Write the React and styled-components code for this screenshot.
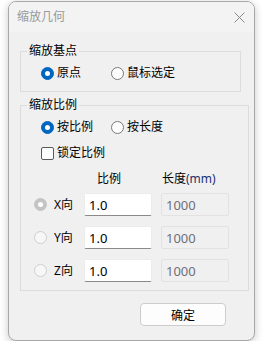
import styled, { createGlobalStyle } from 'styled-components'

const GlobalStyle = createGlobalStyle`
  html, body {
    margin: 0;
    padding: 0;
    background: #ffffff;
  }
  body {
    font-family: "Noto Sans", "Noto Sans CJK SC", sans-serif;
    font-size: 12px;
    color: #000;
  }
`

const Page = styled.div`
  padding: 1px 0 0 8px;
`

const Janela = styled.div`
  width: 247px;
  height: 340px;
  box-sizing: border-box;
  border: 1px solid #a8a8a8;
  border-radius: 8px;
  background: #f0f0f0;
  box-shadow: 0 2px 8px rgba(0, 0, 0, 0.22);
  overflow: hidden;
  display: flex;
  flex-direction: column;
`

const BarraTitulo = styled.div`
  height: 30px;
  flex: none;
  background: #f3f3f3;
  display: flex;
  align-items: center;
  justify-content: space-between;
  padding: 0 9px 0 8px;
`

const Titulo = styled.span`
  color: #999;
  font-size: 12px;
  line-height: 16px;
`

const Fechar = styled.svg`
  width: 11px;
  height: 11px;
`

const Corpo = styled.div`
  display: flex;
  flex-direction: column;
  gap: 5px;
  padding: 11px 13px 0 11px;
`

const Grupo = styled.fieldset`
  margin: 0;
  border: 1px solid #dcdcdc;
  padding: ${p => p.$pad};
  display: flex;
  flex-direction: column;
  gap: 10px;
`

const Legenda = styled.legend`
  padding: 0 2px;
  margin: 0;
  line-height: 16px;
  font-size: 12px;
`

const Linha = styled.div`
  display: flex;
  align-items: center;
  height: 16px;
  padding-left: ${p => p.$indent || 0}px;
`

const Opcao = styled.label`
  display: flex;
  align-items: center;
  gap: 3px;
  width: ${p => p.$w || 'auto'};
  line-height: 16px;
`

const Radio = styled.span`
  width: 13px;
  height: 13px;
  box-sizing: border-box;
  border-radius: 50%;
  flex: none;
  display: flex;
  align-items: center;
  justify-content: center;
  background: ${p => (p.$on ? (p.$off ? '#c4c4c4' : '#0067c0') : p.$off ? '#f7f7f7' : '#fdfdfd')};
  border: 1px solid ${p => (p.$on ? (p.$off ? '#c4c4c4' : '#0067c0') : p.$off ? '#cfcfcf' : '#7a7a7a')};
  &::after {
    content: '';
    display: ${p => (p.$on ? 'block' : 'none')};
    width: 5px;
    height: 5px;
    border-radius: 50%;
    background: #fff;
  }
`

const Caixa = styled.span`
  width: 13px;
  height: 13px;
  box-sizing: border-box;
  border: 1px solid #5a5a5a;
  border-radius: 2px;
  background: #fdfdfd;
  flex: none;
`

const Cabecalho = styled.div`
  display: flex;
  height: 16px;
  line-height: 16px;
  margin-bottom: -4px;
  padding-left: 7px;
`

const Cab = styled.span`
  margin-left: ${p => p.$ml}px;
  width: ${p => p.$w}px;
`

const Mm = styled.span`
  color: #1c2f6e;
`

const LinhaEixo = styled.div`
  display: flex;
  align-items: center;
  height: 23px;
  padding-left: 7px;
`

const RadioCelula = styled.div`
  width: 20px;
  display: flex;
`

const Eixo = styled.span`
  width: 30px;
  line-height: 16px;
`

const Campo = styled.div`
  width: 68px;
  height: 23px;
  box-sizing: border-box;
  padding: 0 4px;
  display: flex;
  align-items: center;
  font-size: 13px;
  margin-left: ${p => (p.$dis ? 9 : 0)}px;
  background: ${p => (p.$dis ? '#f0f0f0' : '#ffffff')};
  color: ${p => (p.$dis ? '#6f6f7a' : '#000')};
  border: 1px solid ${p => (p.$dis ? '#e2e2e2' : '#ececec')};
  border-bottom-color: ${p => (p.$dis ? '#e2e2e2' : '#8a8a8a')};
  border-radius: 2px;
`

const Rodape = styled.div`
  display: flex;
  justify-content: flex-end;
  padding: 12px 28px 0 0;
`

const Botao = styled.button`
  width: 86px;
  height: 23px;
  border: 1px solid #cccccc;
  border-radius: 4px;
  background: #fdfdfd;
  font-family: "Noto Sans CJK SC", sans-serif;
  font-size: 12px;
  color: #000;
  padding: 0;
`

const eixos = ['X', 'Y', 'Z']

export default function App() {
  return (
    <>
      <GlobalStyle />
      <Page>
        <Janela>
          <BarraTitulo>
            <Titulo>缩放几何</Titulo>
            <Fechar viewBox="0 0 11 11">
              <path d="M0.5 0.5 L10.5 10.5 M10.5 0.5 L0.5 10.5" stroke="#8a8a8a" strokeWidth="1" fill="none" />
            </Fechar>
          </BarraTitulo>
          <Corpo>
            <Grupo $pad="6px 6px 10px 6px">
              <Legenda>缩放基点</Legenda>
              <Linha $indent={14}>
                <Opcao $w="70px"><Radio $on />原点</Opcao>
                <Opcao><Radio />鼠标选定</Opcao>
              </Linha>
            </Grupo>
            <Grupo $pad="6px 6px 8px 6px">
              <Legenda>缩放比例</Legenda>
              <Linha $indent={14}>
                <Opcao $w="70px"><Radio $on />按比例</Opcao>
                <Opcao><Radio />按长度</Opcao>
              </Linha>
              <Linha $indent={14}>
                <Opcao><Caixa />锁定比例</Opcao>
              </Linha>
              <Cabecalho>
                <Cab $ml={63} $w={65}>比例</Cab>
                <Cab $ml={0} $w={80}>长度<Mm>(mm)</Mm></Cab>
              </Cabecalho>
              {eixos.map((e, i) => (
                <LinhaEixo key={e}>
                  <RadioCelula><Radio $off $on={i === 0} /></RadioCelula>
                  <Eixo>{e}向</Eixo>
                  <Campo>1.0</Campo>
                  <Campo $dis>1000</Campo>
                </LinhaEixo>
              ))}
            </Grupo>
          </Corpo>
          <Rodape>
            <Botao>确定</Botao>
          </Rodape>
        </Janela>
      </Page>
    </>
  )
}
